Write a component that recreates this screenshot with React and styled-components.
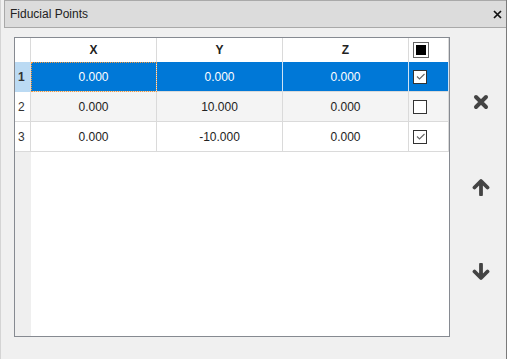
import React from "react"
import styled, { createGlobalStyle } from "styled-components"

const GlobalStyle = createGlobalStyle`
  html, body {
    margin: 0;
    padding: 0;
    background: #f0f0f0;
    font-family: "Liberation Sans", Arial, sans-serif;
  }
`

const points = [
  { x: "0.000", y: "0.000", z: "0.000", on: true },
  { x: "0.000", y: "10.000", z: "0.000", on: false },
  { x: "0.000", y: "-10.000", z: "0.000", on: true },
]

const App = () => {
  return (
    <Window>
      <GlobalStyle />
      <TitleBar>
        <Title>Fiducial Points</Title>
        <CloseButton>
          <svg width="9" height="9" viewBox="0 0 9 9">
            <path d="M1 1 L8 8 M8 1 L1 8" stroke="#111" strokeWidth="1.7" />
          </svg>
        </CloseButton>
      </TitleBar>

      <Body>
        <GridFrame>
          <Grid>
            <Corner />
            <HeadCell>X</HeadCell>
            <HeadCell>Y</HeadCell>
            <HeadCell>Z</HeadCell>
            <HeadCell $check>
              <MasterBox>
                <span />
              </MasterBox>
            </HeadCell>

            {points.map((p, i) => {
              const selected = i === 0
              const alt = i % 2 === 1
              return (
                <React.Fragment key={i}>
                  <RowHead $selected={selected}>{i + 1}</RowHead>
                  <Cell $selected={selected} $alt={alt} $focus={selected}>
                    {p.x}
                  </Cell>
                  <Cell $selected={selected} $alt={alt}>
                    {p.y}
                  </Cell>
                  <Cell $selected={selected} $alt={alt}>
                    {p.z}
                  </Cell>
                  <Cell $selected={selected} $alt={alt} $check>
                    <CheckBox>
                      {p.on && (
                        <svg width="11" height="11" viewBox="0 0 11 11">
                          <path
                            d="M2 5.5 L4.5 8 L9.5 3"
                            fill="none"
                            stroke="#666"
                            strokeWidth="1.1"
                          />
                        </svg>
                      )}
                    </CheckBox>
                  </Cell>
                </React.Fragment>
              )
            })}
          </Grid>
        </GridFrame>

        <SideBar>
          <ToolButton title="Remove">
            <svg width="16" height="16" viewBox="0 0 16 16">
              <path
                d="M3 3 L13 13 M13 3 L3 13"
                stroke="#444"
                strokeWidth="4"
                strokeLinecap="round"
              />
            </svg>
          </ToolButton>
          <ToolButton title="Move up">
            <svg width="18" height="18" viewBox="0 0 18 18">
              <path
                d="M9 16.5 L9 4 M2.5 9.5 L9 3 L15.5 9.5"
                fill="none"
                stroke="#444"
                strokeWidth="3.8"
                strokeLinecap="round"
                strokeLinejoin="round"
              />
            </svg>
          </ToolButton>
          <ToolButton title="Move down">
            <svg width="18" height="18" viewBox="0 0 18 18">
              <path
                d="M9 1.5 L9 14 M2.5 8.5 L9 15 L15.5 8.5"
                fill="none"
                stroke="#444"
                strokeWidth="3.8"
                strokeLinecap="round"
                strokeLinejoin="round"
              />
            </svg>
          </ToolButton>
        </SideBar>
      </Body>
    </Window>
  )
}

export default App

const Window = styled.div`
  box-sizing: border-box;
  width: 507px;
  height: 359px;
  background: #f0f0f0;
  border-left: 1px solid #d4d4d4;
  border-right: 1px solid #7a7a7a;
  overflow: hidden;
`
const TitleBar = styled.div`
  box-sizing: border-box;
  display: flex;
  align-items: center;
  justify-content: space-between;
  height: 28px;
  margin-left: 3px;
  padding: 0 4px 0 5px;
  background: #dcdcdc;
  border: 1px solid #a9a9a9;
  border-right: none;
`
const Title = styled.div`
  font-size: 12px;
  color: #222;
`
const CloseButton = styled.div`
  display: flex;
  align-items: center;
  width: 9px;
  height: 9px;
  margin-top: 1px;
`
const Body = styled.div`
  display: flex;
  padding: 9px 0 0 13px;
`
const GridFrame = styled.div`
  box-sizing: border-box;
  width: 436px;
  height: 300px;
  border: 1px solid #868a91;
  background: linear-gradient(to right, #efefef 16px, #ffffff 16px);
`
const Grid = styled.div`
  display: grid;
  grid-template-columns: 16px 126px 126px 126px 40px;
  grid-template-rows: 24px repeat(3, 30px);
  font-size: 12px;
  color: #222;
`
const Corner = styled.div`
  background: #fff;
  border-right: 1px solid #dadada;
`
const HeadCell = styled.div`
  display: flex;
  align-items: center;
  justify-content: ${(p) => (p.$check ? "flex-start" : "center")};
  padding-left: ${(p) => (p.$check ? "4px" : "0")};
  background: #fff;
  border-right: 1px solid #dadada;
  font-weight: bold;
  color: #222;
`
const RowHead = styled.div`
  display: flex;
  align-items: center;
  padding-left: 3px;
  padding-top: 1px;
  background: ${(p) => (p.$selected ? "#bbdaf3" : "#fff")};
  border-right: 1px solid #dadada;
  border-bottom: 1px solid ${(p) => (p.$selected ? "#bbdaf3" : "#dadada")};
  font-weight: ${(p) => (p.$selected ? "bold" : "normal")};
  color: #333;
`
const Cell = styled.div`
  position: relative;
  box-sizing: border-box;
  display: flex;
  align-items: center;
  justify-content: ${(p) => (p.$check ? "flex-start" : "center")};
  padding-left: ${(p) => (p.$check ? "4px" : "0")};
  background: ${(p) =>
    p.$selected ? "#0078d7" : p.$alt ? "#f4f4f4" : "#ffffff"};
  color: ${(p) => (p.$selected ? "#fff" : "#222")};
  border-right: 1px solid ${(p) => (p.$selected ? "#cfe3f5" : "#dadada")};
  border-bottom: 1px solid #dadada;

  &::after {
    content: "";
    display: ${(p) => (p.$focus ? "block" : "none")};
    position: absolute;
    inset: 0 -1px -1px 0;
    border: 1px dotted #f39a3c;
  }
`
const CheckBox = styled.div`
  box-sizing: border-box;
  display: flex;
  align-items: center;
  justify-content: center;
  width: 14px;
  height: 14px;
  background: #fff;
  border: 1px solid #333;
`
const MasterBox = styled.div`
  box-sizing: border-box;
  width: 16px;
  height: 16px;
  padding: 2px;
  background: #fff;
  border: 1px solid #666;

  span {
    display: block;
    width: 100%;
    height: 100%;
    background: #000;
  }
`
const SideBar = styled.div`
  display: flex;
  flex-direction: column;
  align-items: center;
  gap: 66px;
  width: 56px;
  padding-left: 6px;
  padding-top: 55px;
  box-sizing: border-box;
`
const ToolButton = styled.div`
  display: flex;
  align-items: center;
  justify-content: center;
  width: 19px;
  height: 19px;
  cursor: pointer;
`
